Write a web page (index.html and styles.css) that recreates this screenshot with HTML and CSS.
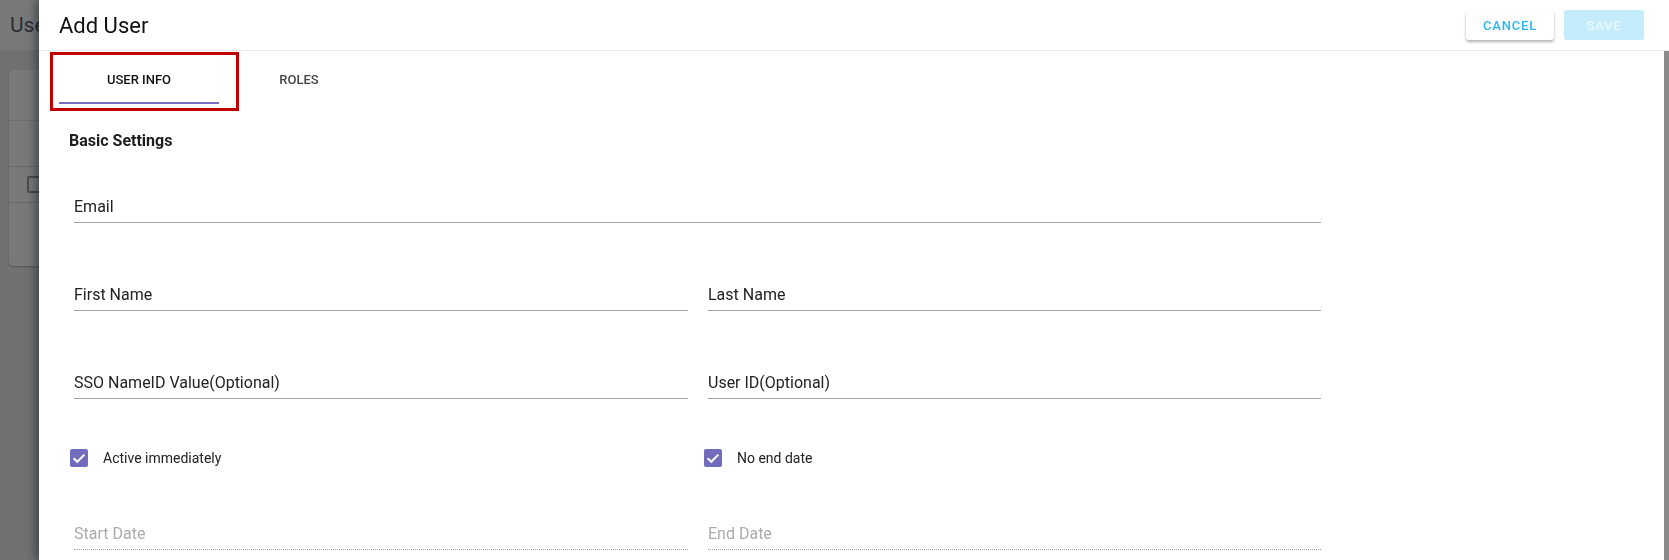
FILE: index.html
```html
<!DOCTYPE html>
<html lang="en">
<head>
<meta charset="utf-8">
<title>Add User</title>
<link rel="stylesheet" href="styles.css">
</head>
<body>
<div class="page">
  <header class="app-bar"><span class="app-title">Users</span></header>
  <main class="app-main">
    <div class="card">
      <div class="card-head"></div>
      <div class="card-row"></div>
      <div class="card-row card-row-check"><span class="bg-check"></span></div>
      <div class="card-foot"></div>
    </div>
  </main>
</div>

<aside class="dialog">
  <header class="dlg-head">
    <h1 class="dlg-title">Add User</h1>
    <div class="actions">
      <button class="btn btn-cancel">CANCEL</button>
      <button class="btn btn-save" disabled>SAVE</button>
    </div>
  </header>
  <div class="dlg-body">
    <div class="scroll-area">
      <nav class="tabs">
        <div class="tab tab-active">USER INFO</div>
        <div class="tab">ROLES</div>
      </nav>
      <div class="highlight"></div>
      <section class="form">
        <h2 class="section-title">Basic Settings</h2>
        <div class="field-row row-first">
          <div class="field field-full">Email</div>
        </div>
        <div class="field-row">
          <div class="field field-left">First Name</div>
          <div class="field field-right">Last Name</div>
        </div>
        <div class="field-row">
          <div class="field field-left">SSO NameID Value(Optional)</div>
          <div class="field field-right">User ID(Optional)</div>
        </div>
        <div class="check-row">
          <label class="check-item">
            <span class="checkbox"><svg width="18" height="18" viewBox="0 0 18 18"><path d="M3.6 9.2 L7.3 12.8 L14.4 5.6" fill="none" stroke="#fff" stroke-width="2"/></svg></span>
            <span class="check-label">Active immediately</span>
          </label>
          <label class="check-item">
            <span class="checkbox"><svg width="18" height="18" viewBox="0 0 18 18"><path d="M3.6 9.2 L7.3 12.8 L14.4 5.6" fill="none" stroke="#fff" stroke-width="2"/></svg></span>
            <span class="check-label">No end date</span>
          </label>
        </div>
        <div class="field-row row-date">
          <div class="field field-left field-disabled">Start Date</div>
          <div class="field field-right field-disabled">End Date</div>
        </div>
      </section>
    </div>
    <div class="scrollbar"></div>
  </div>
</aside>
</body>
</html>
```

FILE: styles.css
```css
html, body {
  margin: 0;
  padding: 0;
  height: 100%;
  overflow: hidden;
  font-family: Roboto, "Liberation Sans", Arial, sans-serif;
}

/* background application (dimmed by the modal) */
.page {
  height: 560px;
  background: #6f7173;
}
.app-bar {
  height: 50px;
  background: #78797a;
  display: flex;
  align-items: center;
  padding-left: 10px;
}
.app-title {
  font-size: 21px;
  color: #2a2e33;
}
.app-main {
  padding: 20px 0 0 9px;
}
.card {
  width: 240px;
  height: 196px;
  background: #78797b;
  border-radius: 4px;
  box-shadow: 0 1px 2px rgba(0,0,0,0.25);
}
.card-head {
  height: 50px;
  border-bottom: 1px solid #6c6e70;
}
.card-row {
  height: 45px;
  border-bottom: 1px solid #66686a;
}
.card-row-check {
  height: 35px;
  display: flex;
  align-items: center;
  padding-left: 18px;
}
.bg-check {
  width: 13px;
  height: 13px;
  border: 2px solid #4a4c4e;
  border-radius: 2px;
}

/* dialog */
.dialog {
  position: fixed;
  top: 0;
  left: 39px;
  right: 0;
  bottom: 0;
  background: #fff;
  display: flex;
  flex-direction: column;
  box-shadow: -3px 0 10px rgba(0,0,0,0.45);
}
.dlg-head {
  height: 50px;
  flex: none;
  border-bottom: 1px solid #e8e8e8;
  display: flex;
  align-items: center;
  justify-content: space-between;
  padding: 0 25px 0 20px;
}
.dlg-title {
  margin: 0;
  font-size: 22px;
  font-weight: 400;
  color: #111;
}
.actions {
  display: flex;
  align-items: center;
  gap: 10px;
}
.btn {
  height: 30px;
  border: none;
  border-radius: 3px;
  font-family: Roboto, "Liberation Sans", Arial, sans-serif;
  font-size: 13px;
  font-weight: 500;
  letter-spacing: 0.8px;
  padding: 0;
}
.btn-cancel {
  width: 88px;
  height: 29px;
  background: #fff;
  color: #29b6f6;
  box-shadow: 0 2px 3px rgba(0,0,0,0.3);
}
.btn-save {
  width: 80px;
  background: #c4ecfa;
  color: #e8f7fd;
}

.dlg-body {
  flex: 1;
  display: flex;
  position: relative;
  min-height: 0;
}
.scroll-area {
  flex: 1;
  padding-left: 20px;
}
.scrollbar {
  width: 5px;
  background: #8a8a8a;
}

/* tabs */
.tabs {
  display: flex;
}
.tab {
  width: 160px;
  height: 53px;
  box-sizing: border-box;
  padding-top: 5px;
  display: flex;
  align-items: center;
  justify-content: center;
  font-size: 13px;
  font-weight: 500;
  color: #444;
  border-bottom: 2px solid transparent;
}
.tab-active {
  color: #111;
  border-bottom-color: #7570c0;
}
.highlight {
  position: absolute;
  left: 11px;
  top: 1px;
  width: 183px;
  height: 53px;
  border: 3px solid #c00000;
  pointer-events: none;
}

/* form */
.form {
  padding-left: 10px;
}
.section-title {
  margin: 27px 0 0;
  font-size: 16px;
  line-height: 20px;
  font-weight: 700;
  color: #1d1d1d;
}
.field-row {
  display: flex;
  gap: 20px;
  margin: 62px 0 0 5px;
}
.row-first {
  margin-top: 46px;
}
.row-date {
  margin-top: 57px;
}
.field {
  font-size: 16px;
  line-height: 20px;
  color: #222;
  padding-bottom: 5px;
  border-bottom: 1px solid #9aa5b1;
}
.field-full { width: 1247px; }
.field-left { width: 614px; }
.field-right { width: 613px; }
.field-disabled {
  color: #ababab;
  border-bottom: 1px dotted #9aa5b1;
}

.check-row {
  display: flex;
  gap: 20px;
  margin: 50px 0 0 1px;
}
.check-item {
  width: 614px;
  display: flex;
  align-items: center;
}
.checkbox {
  width: 18px;
  height: 18px;
  border-radius: 2px;
  background: #716cbb;
  display: flex;
}
.check-label {
  margin-left: 15px;
  font-size: 14px;
  color: #222;
}
```
